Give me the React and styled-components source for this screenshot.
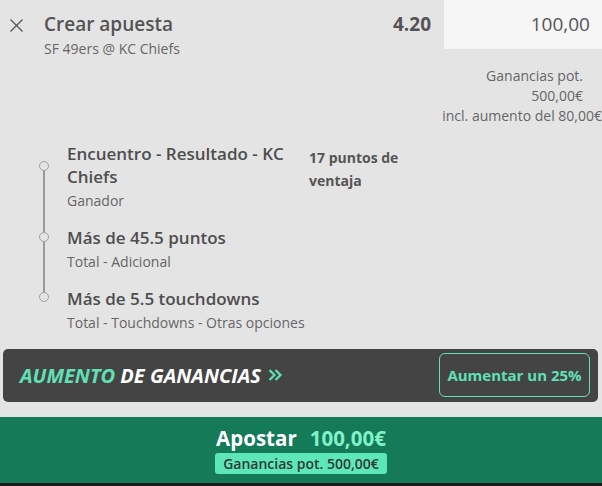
import React from "react";
import styled, { createGlobalStyle } from "styled-components";

const Global = createGlobalStyle`
  html, body { margin: 0; padding: 0; }
  body { background: #e4e4e4; font-family: "Open Sans", "Noto Sans", sans-serif; }
  * { box-sizing: border-box; }
`;

const Page = styled.div`
  width: 602px;
  height: 486px;
  display: flex;
  flex-direction: column;
  background: #e4e4e4;
  overflow: hidden;
`;

const Header = styled.div`
  display: flex;
  align-items: flex-start;
  height: 49px;
`;

const Close = styled.button`
  width: 44px;
  height: 49px;
  border: 0;
  background: none;
  display: flex;
  align-items: flex-start;
  padding: 19px 0 0 10px;
  cursor: pointer;
`;

const TitleBlock = styled.div`
  flex: 1;
  padding-top: 11px;
`;

const Title = styled.div`
  font-size: 19px;
  font-weight: 600;
  color: #545454;
  line-height: 26px;
`;

const Sub = styled.div`
  font-size: 14px;
  color: #666;
  line-height: 20px;
  margin-top: 2px;
`;

const Odds = styled.div`
  font-size: 19px;
  font-weight: 700;
  color: #545454;
  padding: 11px 13px 0 0;
  line-height: 26px;
`;

const Stake = styled.div`
  width: 158px;
  height: 49px;
  background: #f6f6f6;
  font-size: 19px;
  color: #545454;
  text-align: right;
  padding: 11px 12px 0 0;
  line-height: 26px;
`;

const Winnings = styled.div`
  display: flex;
  flex-direction: column;
  align-items: flex-end;
  font-size: 14px;
  color: #666;
  line-height: 20px;
  padding-top: 17px;
`;

const WinLine = styled.div`
  padding-right: ${(p) => (p.$flush ? 0 : 19)}px;
  white-space: nowrap;
`;

const Legs = styled.div`
  position: relative;
  display: flex;
  flex-direction: column;
  padding: 16px 0 0 67px;
  gap: 16px;
`;

const Rail = styled.div`
  position: absolute;
  left: 43px;
  top: 44px;
  width: 2px;
  height: 123px;
  background: #9b9b9b;
`;

const Leg = styled.div`
  position: relative;
  display: flex;
  align-items: flex-start;
`;

const Dot = styled.span`
  position: absolute;
  left: -28px;
  top: ${(p) => p.$top}px;
  width: 10px;
  height: 10px;
  border-radius: 50%;
  border: 1.5px solid #a0a0a0;
  background: #e4e4e4;
`;

const LegText = styled.div`
  width: ${(p) => (p.$narrow ? "230px" : "auto")};
`;

const LegTitle = styled.div`
  font-size: 17px;
  font-weight: 600;
  color: #4e4e4e;
  line-height: 23px;
`;

const LegSub = styled.div`
  font-size: 14px;
  color: #666;
  line-height: 18px;
  margin-top: 4px;
`;

const Extra = styled.div`
  width: 110px;
  margin-left: 12px;
  margin-top: 4px;
  font-size: 14px;
  font-weight: 700;
  color: #555;
  line-height: 23px;
`;

const Boost = styled.div`
  margin: 17px 4px 0 3px;
  height: 53px;
  background: #444;
  border-radius: 5px;
  display: flex;
  align-items: center;
  justify-content: space-between;
  padding: 0 8px 0 17px;
`;

const BoostLabel = styled.div`
  font-size: 20px;
  font-weight: 700;
  font-style: italic;
  color: #fff;
  display: flex;
  align-items: center;
  gap: 7px;
`;

const Teal = styled.span`
  color: #5fe0b7;
`;

const BoostBtn = styled.button`
  width: 151px;
  height: 44px;
  border: 1px solid #5fe0b7;
  border-radius: 6px;
  background: transparent;
  color: #5fe0b7;
  font-family: inherit;
  font-size: 15px;
  font-weight: 700;
  padding: 0;
`;

const Place = styled.div`
  margin-top: 15px;
  height: 67px;
  background: #147a58;
  display: flex;
  flex-direction: column;
  align-items: center;
  padding-top: 8px;
`;

const PlaceMain = styled.div`
  font-size: 20.5px;
  font-weight: 700;
  color: #fff;
  line-height: 26px;
  display: flex;
  gap: 13px;
`;

const Amount = styled.span`
  color: #80f2c8;
`;

const Badge = styled.div`
  margin-top: 2px;
  background: #5de6b8;
  color: #2f3a35;
  font-size: 14px;
  font-weight: 600;
  line-height: 21px;
  padding: 0 8px;
  border-radius: 3px;
`;

const Bottom = styled.div`
  height: 3px;
  background: #1b1b1b;
`;

export default function App() {
  return (
    <Page>
      <Global />
      <Header>
        <Close aria-label="Cerrar">
          <svg width="13" height="13" viewBox="0 0 13 13">
            <path d="M0.5 0.5 L12.5 12.5 M12.5 0.5 L0.5 12.5" stroke="#555" strokeWidth="1.3" />
          </svg>
        </Close>
        <TitleBlock>
          <Title>Crear apuesta</Title>
          <Sub>SF 49ers @ KC Chiefs</Sub>
        </TitleBlock>
        <Odds>4.20</Odds>
        <Stake>100,00</Stake>
      </Header>
      <Winnings>
        <WinLine>Ganancias pot.</WinLine>
        <WinLine>500,00€</WinLine>
        <WinLine $flush>incl. aumento del 80,00€</WinLine>
      </Winnings>
      <Legs>
        <Rail />
        <Leg>
          <Dot $top={19} />
          <LegText $narrow>
            <LegTitle>Encuentro - Resultado - KC Chiefs</LegTitle>
            <LegSub>Ganador</LegSub>
          </LegText>
          <Extra>17 puntos de ventaja</Extra>
        </Leg>
        <Leg>
          <Dot $top={6} />
          <LegText>
            <LegTitle>Más de 45.5 puntos</LegTitle>
            <LegSub>Total - Adicional</LegSub>
          </LegText>
        </Leg>
        <Leg>
          <Dot $top={5} />
          <LegText>
            <LegTitle>Más de 5.5 touchdowns</LegTitle>
            <LegSub>Total - Touchdowns - Otras opciones</LegSub>
          </LegText>
        </Leg>
      </Legs>
      <Boost>
        <BoostLabel>
          <span>
            <Teal>AUMENTO</Teal> DE GANANCIAS
          </span>
          <svg width="15" height="12" viewBox="0 0 15 12">
            <path d="M1.5 1 L6.5 6 L1.5 11 M7.5 1 L12.5 6 L7.5 11" stroke="#5fe0b7" strokeWidth="2.2" fill="none" />
          </svg>
        </BoostLabel>
        <BoostBtn>Aumentar un 25%</BoostBtn>
      </Boost>
      <Place>
        <PlaceMain>
          <span>Apostar</span>
          <Amount>100,00€</Amount>
        </PlaceMain>
        <Badge>Ganancias pot. 500,00€</Badge>
      </Place>
      <Bottom />
    </Page>
  );
}
